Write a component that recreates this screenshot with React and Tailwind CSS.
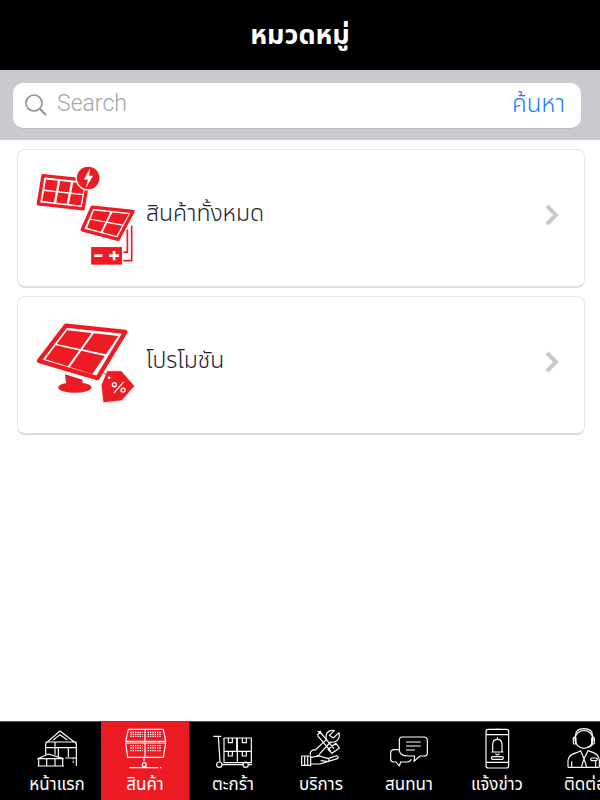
const thai = { fontFamily: '"Noto Sans Thai", "Noto Sans Thai UI", "Noto Sans", "Liberation Sans", sans-serif' };

const lerp = (a, b, t) => [a[0] + (b[0] - a[0]) * t, a[1] + (b[1] - a[1]) * t];
const at = (q, u, v) => lerp(lerp(q[0], q[1], u), lerp(q[3], q[2], u), v);

function Cells({ q, cols, rows, gap = 0.05, fill = "#ed1c24" }) {
  const out = [];
  for (let r = 0; r < rows; r++)
    for (let c = 0; c < cols; c++) {
      const u0 = c / cols + (c ? gap / 2 : 0);
      const u1 = (c + 1) / cols - (c < cols - 1 ? gap / 2 : 0);
      const v0 = r / rows + (r ? gap / 2 : 0);
      const v1 = (r + 1) / rows - (r < rows - 1 ? gap / 2 : 0);
      const pts = [at(q, u0, v0), at(q, u1, v0), at(q, u1, v1), at(q, u0, v1)];
      out.push(<polygon key={`${r}-${c}`} points={pts.map((p) => p.join(",")).join(" ")} fill={fill} />);
    }
  return <>{out}</>;
}

function AllIcon() {
  return (
    <svg width="107" height="103" viewBox="70 55 320 310" className="shrink-0">
      <polygon points="99,90 234,104 220,190 85,175" fill="none" stroke="#ed1c24" strokeWidth="10" strokeLinejoin="round" />
      <Cells q={[[108, 102], [226, 114], [212, 180], [97, 166]]} cols={3} rows={2} gap={0.06} />
      <circle cx="235" cy="97" r="38" fill="#fff" />
      <circle cx="235" cy="97" r="34" fill="#ed1c24" />
      <path d="M241 68 L222 102 L234 102 L228 127 L250 90 L238 90 Z" fill="#fff" />
      <polygon points="247,185 370,198 325,282 217,253" fill="none" stroke="#ed1c24" strokeWidth="10" strokeLinejoin="round" />
      <Cells q={[[252, 195], [357, 206], [320, 272], [232, 247]]} cols={2} rows={2} gap={0.06} />
      <rect x="244" y="305" width="93" height="53" fill="#ed1c24" />
      <rect x="253" y="327" width="25" height="8" fill="#fff" />
      <path d="M298 331 H328 M313 317 V345" stroke="#fff" strokeWidth="8" />
      <path d="M366 240 V346 H341 M353 252 V320 H341" fill="none" stroke="#ed1c24" strokeWidth="5" />
    </svg>
  );
}

function PromoIcon() {
  return (
    <svg width="107" height="103" viewBox="70 55 320 310" className="shrink-0">
      <ellipse cx="195" cy="285" rx="50" ry="16" fill="#ed1c24" />
      <polygon points="165,245 218,262 218,282 170,282" fill="#ed1c24" />
      <polygon points="168,99 347,118 263,257 87,205" fill="#fff" stroke="#ed1c24" strokeWidth="13" strokeLinejoin="round" />
      <Cells q={[[172, 113], [326, 130], [247, 245], [106, 200]]} cols={2} rows={2} gap={0.045} />
      <polygon points="292,235 335,235 375,281 336,325 280,331 274,278" fill="#ed1c24" stroke="#fff" strokeWidth="2" />
      <path d="M270 232 L300 256" stroke="#ed1c24" strokeWidth="3" />
      <circle cx="298" cy="256" r="4" fill="#fff" />
      <circle cx="314" cy="277" r="6" fill="none" stroke="#fff" strokeWidth="4" />
      <circle cx="340" cy="293" r="6" fill="none" stroke="#fff" strokeWidth="4" />
      <path d="M342 268 L312 302" stroke="#fff" strokeWidth="3.5" />
    </svg>
  );
}

const NI = ({ x, children }) => (
  <svg width="88" height="50" viewBox={`${x} 20 264 150`} className="block" fill="none" stroke="#fff" strokeWidth="3.5" strokeLinejoin="round">
    {children}
  </svg>
);

const icons = [
  <NI x={39} key="h">
    <path d="M137 84 L180 47 L230 85 M137 80 H230 M137 84 V118 M229 85 V152 M160 74 L180 58 L202 74 M138 97 H228 M165 80 V118 M205 97 V125 M175 97 V125 M196 128 H228" />
    <path d="M113 130 L145 116 L190 130 Z M116 132 V152 H188 V132 M140 132 V152 M165 132 V152 M113 152 H192" />
    <path d="M218 130 H222 M218 140 H222" strokeWidth="4" />
  </NI>,
  <NI x={303} key="p">
    <path d="M385 42 H490 L497 78 H377 Z M377 83 H497 L490 126 H383 Z M435 42 V78 M435 83 V126" />
    <path d="M391 51 H428 M391 57 H428 M391 63 H428 M443 51 H482 M443 57 H482 M443 63 H482 M391 91 H428 M391 98 H428 M391 106 H428 M443 91 H482 M443 98 H482 M443 106 H482" strokeDasharray="4 3" strokeWidth="4" />
    <path d="M432 128 V138 M388 157 H475 M480 157 H484" />
    <circle cx="433" cy="148" r="6" />
  </NI>,
  <NI x={567} key="c">
    <path d="M640 63 H664 M655 63 L660 140 M666 148 H729 M745 148 H756" />
    <circle cx="658" cy="148" r="8" />
    <circle cx="737" cy="148" r="8" />
    <path d="M672 68 H710 V108 H672 Z M712 68 H754 V108 H712 Z M672 108 V142 H754 V108 M712 108 V142" />
    <path d="M685 68 V82 H697 V68 M727 68 V82 H739 V68 M685 108 V122 H697 V108 M727 108 V122 H739 V108" />
  </NI>,
  <NI x={-69} key="s">
    <path d="M5 122 H32 V150 H5 Z M14 122 V150 M23 122 V150" />
    <path d="M32 126 L58 122 L85 130 C90 134 86 140 80 138 L62 136 M32 146 H60 L112 130 C118 126 112 120 106 122 L84 130" />
    <path d="M60 50 L102 100 M52 60 L93 108 M52 50 L62 48 L52 60 M84 102 L108 84 L118 98 L96 114 Z" />
    <path d="M117 52 L100 68 L88 60 L103 46 C85 42 74 56 80 72 L46 104 C36 102 28 110 32 118 M117 52 C122 70 108 84 92 80 L60 114 C60 120 54 122 50 120" />
  </NI>,
  <NI x={195} key="t">
    <path d="M306 65 H372 Q382 65 382 75 V112 Q382 122 372 122 H360 L342 138 L344 122 H326 Q296 122 298 100 V75 Q298 65 306 65 Z" />
    <path d="M318 80 H362 M318 92 H362 M318 104 H345" />
    <path d="M296 103 H282 Q272 103 272 113 V132 Q272 140 282 140 H288 L298 152 L302 140 H322 Q330 140 334 132" />
  </NI>,
  <NI x={459} key="n">
    <rect x="558" y="42" width="68" height="116" rx="7" />
    <path d="M558 58 H626 M558 141 H626 M586 42 H598" />
    <path d="M574 110 H610 M578 110 V88 Q578 72 592 72 Q606 72 606 88 V110 M586 115 Q592 122 598 115 M592 66 V72" />
    <rect x="574" y="124" width="36" height="8" rx="4" />
  </NI>,
  <NI x={723} key="o">
    <circle cx="852" cy="72" r="27" />
    <path d="M826 78 V62 Q826 40 852 40 Q878 40 878 62 V78" />
    <rect x="820" y="66" width="8" height="20" rx="3" />
    <rect x="875" y="66" width="8" height="20" rx="3" />
    <path d="M878 84 Q876 94 862 96" />
    <path d="M804 156 V135 Q806 118 830 112 L842 106 L852 130 L864 106 L880 112 Q896 118 898 135 V156 M804 156 H898 M852 130 L844 156 M852 130 L860 156 M815 138 V156 M887 138 V156" />
    <rect x="872" y="128" width="20" height="8" rx="4" />
  </NI>,
];

const nav = ["หน้าแรก", "สินค้า", "ตะกร้า", "บริการ", "สนทนา", "แจ้งข่าว", "ติดต่อ"];

function Card({ icon, label }) {
  return (
    <div className="flex h-[139px] items-center rounded-[8px] border border-[#e6e6e6] border-b-2 border-b-[#dcdcdc] bg-white pl-[15px] pr-[24px]">
      <div className="-mt-[6px]">{icon}</div>
      <span className="ml-[6px] flex-1 -mt-[8px] text-[23px] font-light leading-[28px] text-[#1c2230]" style={thai}>
        {label}
      </span>
      <svg width="16" height="24" viewBox="0 0 16 24" className="shrink-0 -mt-[7px]">
        <path d="M3 3 L12 12 L3 21" fill="none" stroke="#c7c7cc" strokeWidth="4" />
      </svg>
    </div>
  );
}

export default function App() {
  return (
    <div className="flex h-[800px] w-[600px] flex-col overflow-hidden bg-white">
      <header className="flex h-[70px] shrink-0 items-center justify-center bg-black">
        <h1 className="text-[27px] font-bold leading-none text-white" style={thai}>หมวดหมู่</h1>
      </header>
      <div className="h-[70px] shrink-0 bg-[#c9c9ce] pl-[13px] pr-[19px] pt-[13px]">
        <div className="flex h-[45px] items-center rounded-[10px] bg-white pl-[11px] pr-[16px] shadow-[0_1px_1px_rgba(0,0,0,0.08)]">
          <svg width="24" height="24" viewBox="0 0 24 24" className="shrink-0 -mt-[2px]">
            <circle cx="10" cy="10" r="8" fill="none" stroke="#8e8e93" strokeWidth="1.6" />
            <path d="M16 16 L22 22" stroke="#8e8e93" strokeWidth="1.8" />
          </svg>
          <span className="ml-[9px] -mt-[2px] flex-1 text-[23px] font-light text-[#a4a4a9]" style={{ fontFamily: "Roboto, sans-serif" }}>Search</span>
          <span className="-mt-[2px] text-[24px] font-light leading-none text-[#1a7bff]" style={thai}>ค้นหา</span>
        </div>
      </div>
      <main className="flex flex-1 flex-col gap-[8px] pl-[17px] pr-[15px] pt-[9px]">
        <Card icon={<AllIcon />} label="สินค้าทั้งหมด" />
        <Card icon={<PromoIcon />} label="โปรโมชัน" />
      </main>
      <nav className="flex h-[79px] shrink-0 overflow-hidden border-t border-t-[#555] bg-black pl-[13px]">
        {nav.map((label, i) => (
          <div key={label} className={`flex w-[88px] shrink-0 flex-col items-center ${i === 1 ? "bg-[#ed1c24]" : ""}`}>
            {icons[i]}
            <span className="mt-px whitespace-nowrap text-[17px] leading-[24px] text-white" style={thai}>{label}</span>
          </div>
        ))}
      </nav>
    </div>
  );
}
